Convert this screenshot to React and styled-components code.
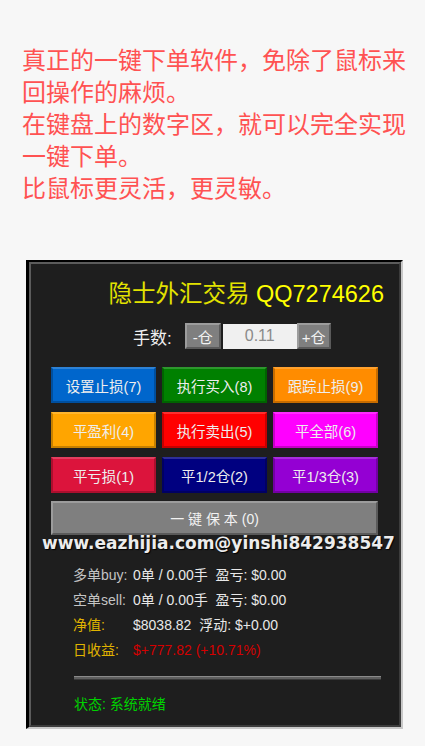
import React, { useState } from 'react';
import styled, { createGlobalStyle } from 'styled-components';

const GlobalStyle = createGlobalStyle`
    body {
        margin: 0;
        background: #f7f7f7;
        font-family: "Liberation Sans", "Noto Sans CJK SC", sans-serif;
    }
`;

const StyledIntro = styled.div`
    width: 390px;
    padding: 43px 0 0 22px;
    font-family: "Noto Sans CJK SC", sans-serif;
    font-size: 24px;
    line-height: 32px;
    color: #ff5252;
`;

const StyledPanel = styled.div`
    box-sizing: border-box;
    width: 377px;
    height: 469px;
    margin: 57px 0 0 26px;
    border-top: 2px solid #000;
    border-left: 3px solid #000;
    border-right: 2px solid #c8c8c8;
    border-bottom: 2px solid #c8c8c8;
`;

const StyledInner = styled.div`
    position: relative;
    box-sizing: border-box;
    height: 100%;
    background: #1e1e1e;
    border: 2px solid;
    border-color: #5c5c5c #3c3c3c #3c3c3c #5c5c5c;
`;

const StyledTitle = styled.div`
    padding: 16px 15px 0 0;
    text-align: right;
    font-size: 23.5px;
    line-height: 28px;
    color: #ffff00;

    span {
        color: #e2e200;
    }
`;

const StyledLotRow = styled.div`
    display: flex;
    align-items: center;
    height: 26px;
    margin-top: 15px;
    padding-left: 102px;
`;

const StyledLotLabel = styled.label`
    margin-right: 13px;
    font-size: 17px;
    color: #f0f0f0;
`;

const GrayBevel = `
    box-sizing: border-box;
    background: #7f7f7f;
    border: 2px solid;
    border-color: #9c9c9c #5a5a5a #5a5a5a #9c9c9c;
    color: #f2f2f2;
    font-family: "Liberation Sans", "Noto Sans CJK SC", sans-serif;
    padding: 0;
    cursor: pointer;
`;

const StyledStepButton = styled.button`
    ${GrayBevel}
    width: ${p => p.$w}px;
    height: 26px;
    margin-right: ${p => p.$gap || 0}px;
    font-size: 15px;
`;

const StyledLotInput = styled.input`
    box-sizing: border-box;
    width: 74px;
    height: 25px;
    border: none;
    outline: none;
    background: #f0f0f0;
    text-align: center;
    font-family: "Liberation Sans", sans-serif;
    font-size: 16px;
    color: #8a8a8a;
`;

const StyledGrid = styled.div`
    display: grid;
    grid-template-columns: repeat(3, 105px);
    grid-auto-rows: 36px;
    gap: 9px 6px;
    margin-top: 18px;
    padding-left: 20px;
`;

const StyledActionButton = styled.button`
    box-sizing: border-box;
    background: ${p => p.$bg};
    border: 2px solid rgba(0, 0, 0, 0.22);
    border-top-color: rgba(255, 255, 255, 0.18);
    color: #eeeeee;
    font-family: "Liberation Sans", "Noto Sans CJK SC", sans-serif;
    font-size: 14.5px;
    padding: 0;
    cursor: pointer;
`;

const StyledBigButton = styled.button`
    ${GrayBevel}
    display: block;
    width: 327px;
    height: 34px;
    margin: 8px 0 0 20px;
    font-size: 14px;
    white-space: pre;
`;

const StyledWatermark = styled.div`
    position: absolute;
    top: 271px;
    left: 11px;
    font-family: "DejaVu Sans", sans-serif;
    font-weight: bold;
    font-size: 17px;
    line-height: 17px;
    color: #ececec;
    text-shadow: 1px 1px 1px #000;
    white-space: nowrap;
    pointer-events: none;
`;

const StyledStats = styled.div`
    margin-top: 28px;
    padding-left: 42px;
`;

const StyledStatRow = styled.div`
    display: grid;
    grid-template-columns: 60px auto;
    font-size: 14px;
    line-height: 25px;
    white-space: pre;
`;

const StyledStatLabel = styled.span`
    color: ${p => p.$color};
`;

const StyledStatValue = styled.span`
    color: ${p => p.$color || '#e8e8e8'};
`;

const StyledDivider = styled.div`
    height: 2px;
    margin: 13px 18px 0 43px;
    background: #5e5e5e;
    border-top: 1px solid #8a8a8a;
    border-bottom: 1px solid #3a3a3a;
`;

const StyledStatus = styled.div`
    margin-top: 11px;
    padding-left: 43px;
    font-size: 14px;
    line-height: 26px;
    color: #00d200;
`;

const ACTIONS = [
    { label: '设置止损(7)', bg: '#0066cc' },
    { label: '执行买入(8)', bg: '#008000' },
    { label: '跟踪止损(9)', bg: '#ff8c00' },
    { label: '平盈利(4)', bg: '#ffa500' },
    { label: '执行卖出(5)', bg: '#ff0000' },
    { label: '平全部(6)', bg: '#ff00ff' },
    { label: '平亏损(1)', bg: '#dc143c' },
    { label: '平1/2仓(2)', bg: '#000080' },
    { label: '平1/3仓(3)', bg: '#9400d3' },
];

const STATS = [
    { label: '多单buy:', labelColor: '#c4c4c4', value: '0单 / 0.00手  盈亏: $0.00' },
    { label: '空单sell:', labelColor: '#c4c4c4', value: '0单 / 0.00手  盈亏: $0.00' },
    { label: '净值:', labelColor: '#e0b400', value: '$8038.82  浮动: $+0.00' },
    { label: '日收益:', labelColor: '#e0b400', value: '$+777.82 (+10.71%)', valueColor: '#d40000' },
];

const App = () => {
    const [ lots, setLots ] = useState('0.11');

    const step = delta => {
        const next = Math.max(0.01, parseFloat(lots) + delta);
        setLots(next.toFixed(2));
    };

    return (
        <>
            <GlobalStyle />
            <StyledIntro>
                <div>真正的一键下单软件，免除了鼠标来回操作的麻烦。</div>
                <div>在键盘上的数字区，就可以完全实现一键下单。</div>
                <div>比鼠标更灵活，更灵敏。</div>
            </StyledIntro>

            <StyledPanel>
                <StyledInner>
                    <StyledTitle><span>隐士外汇交易</span> QQ7274626</StyledTitle>

                    <StyledLotRow>
                        <StyledLotLabel htmlFor="lots">手数:</StyledLotLabel>
                        <StyledStepButton $w={36} $gap={2} onClick={() => step(-0.01)}>-仓</StyledStepButton>
                        <StyledLotInput id="lots" value={lots} onChange={e => setLots(e.target.value)} />
                        <StyledStepButton $w={34} onClick={() => step(0.01)}>+仓</StyledStepButton>
                    </StyledLotRow>

                    <StyledGrid>
                        {ACTIONS.map(a => (
                            <StyledActionButton key={a.label} $bg={a.bg}>{a.label}</StyledActionButton>
                        ))}
                    </StyledGrid>

                    <StyledBigButton>一 键 保 本 (0)</StyledBigButton>

                    <StyledWatermark>www.eazhijia.com@yinshi842938547</StyledWatermark>

                    <StyledStats>
                        {STATS.map(s => (
                            <StyledStatRow key={s.label}>
                                <StyledStatLabel $color={s.labelColor}>{s.label}</StyledStatLabel>
                                <StyledStatValue $color={s.valueColor}>{s.value}</StyledStatValue>
                            </StyledStatRow>
                        ))}
                    </StyledStats>

                    <StyledDivider />

                    <StyledStatus>状态: 系统就绪</StyledStatus>
                </StyledInner>
            </StyledPanel>
        </>
    );
};

export default App;
